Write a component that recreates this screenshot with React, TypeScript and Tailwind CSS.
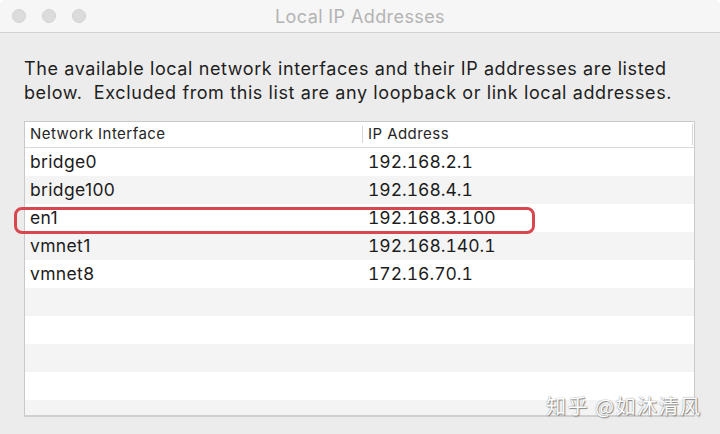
const rows: [string, string][] = [
  ['bridge0', '192.168.2.1'],
  ['bridge100', '192.168.4.1'],
  ['en1', '192.168.3.100'],
  ['vmnet1', '192.168.140.1'],
  ['vmnet8', '172.16.70.1'],
  ['', ''],
  ['', ''],
  ['', ''],
  ['', ''],
  ['', ''],
];

export default function App() {
  return (
    <div className="w-[720px] h-[434px] bg-white overflow-hidden font-['Inter','Noto_Sans_CJK_SC',sans-serif]">
      <div className="h-full rounded-t-[6px] overflow-hidden bg-[#ececec] flex flex-col relative">
        {/* title bar */}
        <div className="h-[33px] shrink-0 bg-[#f6f6f6] border-b border-[#d1d1d1] flex items-center relative">
          <div className="flex gap-[16px] pl-[12px]">
            <span className="w-[14px] h-[14px] rounded-full bg-[#dcdcdc] border border-[#d2d2d2]" />
            <span className="w-[14px] h-[14px] rounded-full bg-[#dcdcdc] border border-[#d2d2d2]" />
            <span className="w-[14px] h-[14px] rounded-full bg-[#dcdcdc] border border-[#d2d2d2]" />
          </div>
          <div className="absolute inset-0 flex items-center justify-center text-[18px] tracking-[0.4px] text-[#b3b3b3]">
            Local IP Addresses
          </div>
        </div>

        <div className="pl-[24px] pr-[25px] pt-[24px] flex flex-col">
          <p className="text-[18px] leading-[24px] text-[#1e1e1e] tracking-[0.6px] whitespace-nowrap">
            The available local network interfaces and their IP addresses are listed
            <br />
            below.&nbsp; Excluded from this list are any loopback or link local addresses.
          </p>

          <div className="mt-[16px] h-[296px] bg-white border border-[#c9c9c9] border-b-2 border-b-[#cfcfcf] overflow-hidden relative">
            <div className="h-[26px] flex items-center border-b border-[#d9d9d9] text-[15px] tracking-[0.45px] text-[#262626] relative">
              <div className="w-[338px] pl-[5px] border-r border-[#d6d6d6] h-[17px] flex items-center">Network Interface</div>
              <div className="pl-[5px]">IP Address</div>
              <div className="absolute right-[1px] top-[2px] bottom-[2px] w-px bg-[#d6d6d6]" />
            </div>
            {rows.map((r, i) => (
              <div
                key={i}
                className={`h-[28px] flex items-center text-[17.5px] text-[#1c1c1c] ${i % 2 === 0 ? 'bg-white' : 'bg-[#f4f4f4]'}`}
              >
                <div className="w-[339px] pl-[5px] tracking-[0.35px]">{r[0]}</div>
                <div className="pl-[4px] tabular-nums">{r[1]}</div>
              </div>
            ))}
          </div>
        </div>

        {/* highlight around en1 row */}
        <div className="absolute left-[14px] top-[207px] w-[521px] h-[27px] border-[3px] border-[#d8474e] rounded-[8px]" />

        {/* watermark */}
        <div className="absolute left-[546px] top-[391px] text-[20px] text-white tracking-[1.5px] [text-shadow:0_0_1px_#777,1px_1px_1px_#888] font-['Noto_Sans_CJK_SC',sans-serif]">
          知乎 @如沐清风
        </div>
      </div>
    </div>
  );
}
